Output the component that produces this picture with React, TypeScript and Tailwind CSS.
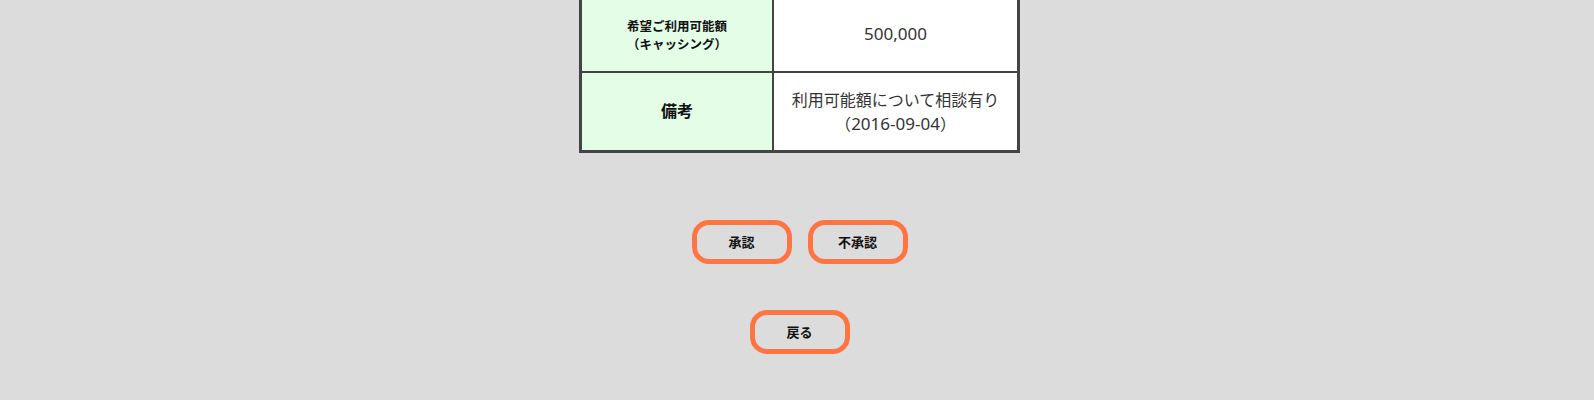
import React from "react";

const font = { fontFamily: '"Noto Sans CJK JP", "Noto Sans", sans-serif' };
const valueFont = {
  fontFamily: '"Noto Sans", "Noto Sans CJK JP", sans-serif',
};

export default function App() {
  return (
    <div
      className="min-h-[400px] overflow-hidden bg-[#dcdcdc] pl-[5px]"
      style={font}
    >
      <div className="mx-auto -mt-[5px] w-[441px] border-[3px] border-[#444444]">
        <div className="flex h-[75px] border-b-2 border-[#444444]">
          <div className="flex w-[192px] flex-col items-center justify-center border-r-2 border-[#444444] bg-[#e4fde6] text-[12.5px] font-bold leading-[18px] text-[#111]">
            <span>希望ご利用可能額</span>
            <span>（キャッシング）</span>
          </div>
          <div
            className="flex flex-1 items-center justify-center bg-white pb-[1px] text-[17px] text-[#333]"
            style={valueFont}
          >
            500,000
          </div>
        </div>
        <div className="flex h-[77px]">
          <div className="flex w-[192px] items-center justify-center border-r-2 border-[#444444] bg-[#e4fde6] pb-[3px] text-[16px] font-bold text-[#111]">
            備考
          </div>
          <div
            className="flex flex-1 flex-col items-center justify-center bg-white text-[16px] leading-[24px] text-[#333]"
            style={valueFont}
          >
            <span>利用可能額について相談有り</span>
            <span>
              （<span className="text-[17px]">2016-09-04</span>）
            </span>
          </div>
        </div>
      </div>

      <div className="mt-[67px] flex justify-center gap-[16px]">
        <button className="flex h-[44px] w-[100px] items-center justify-center rounded-[17px] border-[5px] border-[#ff7440] bg-transparent text-[13px] font-bold text-[#111]">
          承認
        </button>
        <button className="flex h-[44px] w-[100px] items-center justify-center rounded-[17px] border-[5px] border-[#ff7440] bg-transparent text-[13px] font-bold text-[#111]">
          不承認
        </button>
      </div>

      <div className="mt-[46px] flex justify-center">
        <button className="flex h-[44px] w-[100px] items-center justify-center rounded-[17px] border-[5px] border-[#ff7440] bg-transparent text-[13px] font-bold text-[#111]">
          戻る
        </button>
      </div>
    </div>
  );
}
